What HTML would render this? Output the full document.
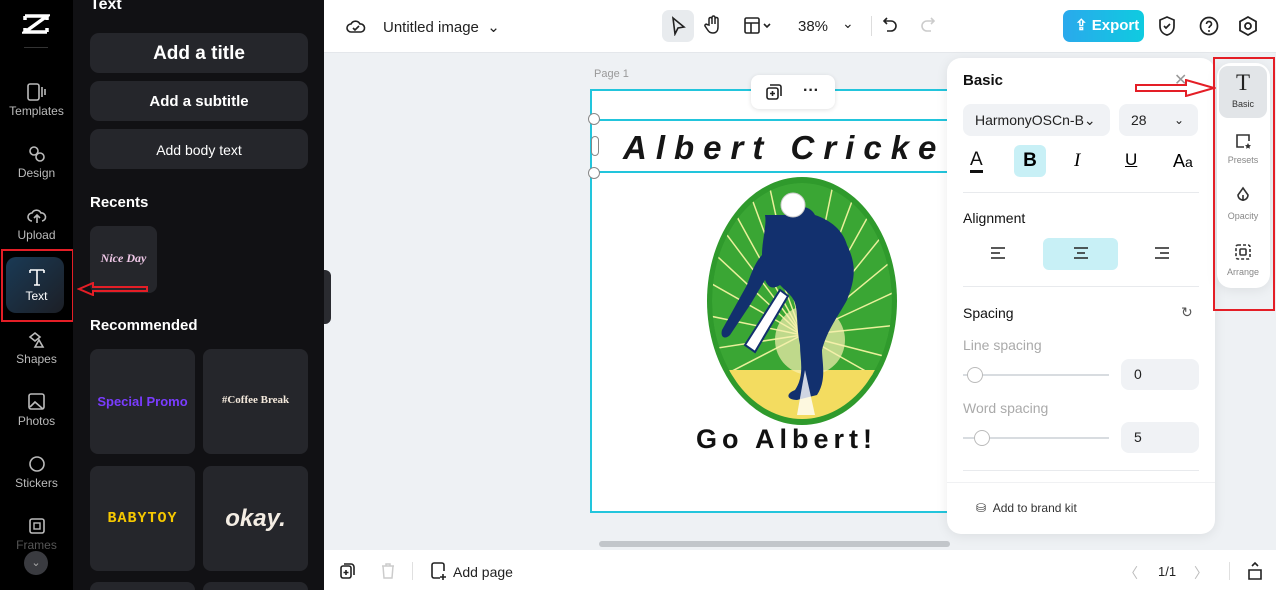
<!DOCTYPE html>
<html style="width:1276px;height:590px;overflow:hidden"><head><meta charset="utf-8"><style>
*{box-sizing:border-box;margin:0;padding:0}
body{width:1276px;height:590px;overflow:hidden;font-family:"Liberation Sans",sans-serif;background:#eef1f4;position:relative}
.abs{position:absolute}
#nav{left:0;top:0;width:73px;height:590px;background:#000}
.ni{position:absolute;left:0;width:73px;text-align:center;color:#bbb;font-size:12px}
.ni svg{display:block;margin:0 auto 3px}
#panel{left:73px;top:0;width:251px;height:590px;background:#111114;overflow:hidden}
.btn{position:absolute;left:17px;width:218px;background:#25262b;border-radius:9px;color:#fff;text-align:center;font-weight:bold}
.h{position:absolute;left:17px;color:#fff;font-weight:bold;font-size:15px}
.card{position:absolute;width:105px;background:#25262b;border-radius:8px;text-align:center;font-weight:bold}
#top{left:324px;top:0;width:952px;height:53px;background:#fff;border-bottom:1px solid #e4e7eb}
#bot{left:324px;top:550px;width:952px;height:40px;background:#fff}
.rp{background:#fff;border-radius:14px;box-shadow:0 2px 12px rgba(0,0,0,.08)}
.lbl{color:#111;font-size:14px;font-weight:bold}
.sel{background:#f0f2f5;border-radius:8px}
</style></head><body>

<div id="nav" class="abs">
 <svg class="abs" style="left:22px;top:13px" width="28" height="22" viewBox="0 0 28 22"><path d="M3 3h22L3 19h22M3 3v4M25 19v-4M3 19v-4M25 3v4" stroke="#fff" stroke-width="3.5" fill="none"/></svg>
 <div class="abs" style="left:24px;top:47px;width:24px;height:1px;background:#333"></div>
 <div class="ni" style="top:83px"><svg width="20" height="18"><rect x="1" y="1" width="11" height="16" rx="2" stroke="#bbb" fill="none" stroke-width="1.6"/><path d="M15 4v10M18 6v6" stroke="#bbb" stroke-width="1.6"/></svg>Templates</div>
 <div class="ni" style="top:145px"><svg width="20" height="18"><circle cx="7" cy="6" r="4" stroke="#bbb" fill="none" stroke-width="1.6"/><circle cx="13" cy="12" r="4" stroke="#bbb" fill="none" stroke-width="1.6"/></svg>Design</div>
 <div class="ni" style="top:207px"><svg width="20" height="18"><path d="M5 14a4 4 0 010-8 5 5 0 019 0 4 4 0 011 8M10 16V8M7 11l3-3 3 3" stroke="#bbb" fill="none" stroke-width="1.6"/></svg>Upload</div>
 <div class="abs" style="left:1px;top:249px;width:73px;height:73px;border:2px solid #e41e26"></div>
 <div class="abs" style="left:6px;top:257px;width:58px;height:56px;border-radius:10px;background:linear-gradient(135deg,#1a3a55,#1c1f26)"></div>
 <div class="ni" style="top:268px;color:#fff"><svg width="20" height="18"><path d="M3 2h14M10 2v15M7 17h6M3 2v3M17 2v3" stroke="#fff" fill="none" stroke-width="1.6"/></svg>Text</div>
 <div class="ni" style="top:331px"><svg width="20" height="18"><path d="M3 6l5-4 5 4-5 4zM8 16l4-7 4 7z" stroke="#bbb" fill="none" stroke-width="1.6"/></svg>Shapes</div>
 <div class="ni" style="top:393px"><svg width="20" height="18"><rect x="2" y="1" width="15" height="15" rx="2" stroke="#bbb" fill="none" stroke-width="1.6"/><path d="M3 14l5-5 8 7" stroke="#bbb" fill="none" stroke-width="1.6"/></svg>Photos</div>
 <div class="ni" style="top:455px"><svg width="20" height="18"><circle cx="10" cy="9" r="7" stroke="#bbb" fill="none" stroke-width="1.6"/></svg>Stickers</div>
 <div class="ni" style="top:517px;color:#555"><svg width="20" height="18"><rect x="3" y="2" width="14" height="14" rx="2" stroke="#bbb" fill="none" stroke-width="1.6"/><rect x="7" y="6" width="6" height="6" stroke="#bbb" fill="none" stroke-width="1.4"/></svg>Frames</div>
 <div class="abs" style="left:24px;top:551px;width:24px;height:24px;border-radius:50%;background:#3a3b40;color:#aaa;font-size:11px;text-align:center;line-height:24px">⌄</div>
</div>

<div id="panel" class="abs">
 <div class="h" style="top:-4px;font-size:16px">Text</div>
 <div class="btn" style="top:33px;height:40px;line-height:42px;font-size:19px">Add a title</div>
 <div class="btn" style="top:81px;height:40px;line-height:42px;font-size:15px">Add a subtitle</div>
 <div class="btn" style="top:129px;height:40px;line-height:42px;font-size:14px;font-weight:normal">Add body text</div>
 <div class="h" style="top:194px">Recents</div>
 <div class="card" style="left:17px;top:226px;width:67px;height:67px;line-height:64px;color:#f0c8e8;font-style:italic;font-size:12px;font-family:'Liberation Serif',serif">Nice Day</div>
 <div class="h" style="top:317px">Recommended</div>
 <div class="card" style="left:17px;top:349px;height:105px;line-height:105px;color:#7a3cff;font-size:13px">Special Promo</div>
 <div class="card" style="left:130px;top:349px;height:105px;line-height:103px;color:#f4e9dc;font-size:11px;font-family:'Liberation Serif',serif">#Coffee Break</div>
 <div class="card" style="left:17px;top:466px;height:105px;line-height:105px;color:#f6c800;font-size:15px;letter-spacing:1px;font-family:'Liberation Mono',monospace">BABYTOY</div>
 <div class="card" style="left:130px;top:466px;height:105px;line-height:105px;color:#f4ede4;font-size:24px;font-style:italic">okay.</div>
 <div class="card" style="left:17px;top:582px;height:20px"></div>
 <div class="card" style="left:130px;top:582px;height:20px"></div>
 <svg class="abs" style="left:4px;top:282px" width="72" height="14"><path d="M2 7l14-6v4h54v4H16v4z" fill="none" stroke="#e41e26" stroke-width="2"/></svg>
</div>
<div class="abs" style="left:324px;top:270px;width:7px;height:54px;background:#2a2b30;border-radius:0 6px 6px 0"></div>

<div id="top" class="abs">
 <svg class="abs" style="left:22px;top:17px" width="20" height="18"><path d="M5 15a4 4 0 010-8 5 5 0 019 0 4 4 0 011 8z M7 11l2 2 4-4" stroke="#222" fill="none" stroke-width="1.6"/></svg>
 <div class="abs" style="left:59px;top:18px;font-size:15px;color:#222">Untitled image &nbsp;⌄</div>
 <div class="abs" style="left:338px;top:10px;width:32px;height:32px;background:#e8ebee;border-radius:7px"></div>
 <svg class="abs" style="left:346px;top:16px" width="16" height="20"><path d="M3 2l11 9-6 1-3 6z" stroke="#222" fill="none" stroke-width="1.6"/></svg>
 <svg class="abs" style="left:380px;top:15px" width="18" height="20"><path d="M5 10V4a1.5 1.5 0 013 0v5V2.5a1.5 1.5 0 013 0V9V4a1.5 1.5 0 013 0v8c0 4-2 6-5 6s-4-1-6-4l-2-3a1.3 1.3 0 012-1.5z" stroke="#222" fill="none" stroke-width="1.5"/></svg>
 <svg class="abs" style="left:420px;top:16px" width="30" height="20"><rect x="1" y="2" width="14" height="15" rx="1.5" stroke="#222" fill="none" stroke-width="1.6"/><path d="M1 7h14M7 7v10M20 8l3 3 3-3" stroke="#222" fill="none" stroke-width="1.6"/></svg>
 <div class="abs" style="left:474px;top:18px;font-size:15px;color:#222">38%</div>
 <div class="abs" style="left:518px;top:15px;font-size:14px;color:#222">⌄</div>
 <div class="abs" style="left:547px;top:16px;width:1px;height:20px;background:#ddd"></div>
 <svg class="abs" style="left:558px;top:16px" width="18" height="20"><path d="M5 2L2 5l3 3M2 5h7a5 5 0 010 10H5" stroke="#222" fill="none" stroke-width="1.6"/></svg>
 <svg class="abs" style="left:594px;top:16px" width="18" height="20"><path d="M13 2l3 3-3 3M16 5H9a5 5 0 000 10h4" stroke="#ccc" fill="none" stroke-width="1.6"/></svg>
 <div class="abs" style="left:739px;top:10px;width:81px;height:32px;border-radius:7px;background:linear-gradient(90deg,#2aa9ec,#0fcbe0);color:#fff;font-weight:bold;font-size:15px;line-height:32px;padding-left:12px">⇪ Export</div>
 <svg class="abs" style="left:833px;top:15px" width="20" height="22"><path d="M10 2l7 3v6c0 5-3 8-7 9-4-1-7-4-7-9V5z M7 11l2 2 4-4" stroke="#222" fill="none" stroke-width="1.7"/></svg>
 <svg class="abs" style="left:874px;top:15px" width="22" height="22"><circle cx="11" cy="11" r="8.5" stroke="#222" fill="none" stroke-width="1.7"/><path d="M8.5 9a2.5 2.5 0 115 0c0 2-2.5 2-2.5 4" stroke="#222" fill="none" stroke-width="1.7"/><circle cx="11" cy="16" r="1" fill="#222"/></svg>
 <svg class="abs" style="left:913px;top:15px" width="22" height="22"><path d="M11 2l8 4.5v9L11 20l-8-4.5v-9z" stroke="#222" fill="none" stroke-width="1.8"/><circle cx="11" cy="11" r="3" stroke="#222" fill="none" stroke-width="1.8"/></svg>
</div>

<!-- canvas -->
<div class="abs" style="left:594px;top:68px;font-size:11px;color:#999">Page 1</div>
<div class="abs" style="left:590px;top:89px;width:380px;height:424px;background:#fff;border:2px solid #22c5dc"></div>
<div class="abs" style="left:592px;top:119px;width:370px;height:54px;border-top:2px solid #22c5dc;border-bottom:2px solid #22c5dc"></div>
<div class="abs" style="left:623px;top:129px;font-size:33px;font-weight:bold;font-style:italic;letter-spacing:9px;color:#151515;white-space:nowrap">Albert Cricke</div>
<div class="abs" style="left:588px;top:113px;width:12px;height:12px;border-radius:50%;background:#fff;border:1px solid #888"></div>
<div class="abs" style="left:588px;top:167px;width:12px;height:12px;border-radius:50%;background:#fff;border:1px solid #888"></div>
<div class="abs" style="left:591px;top:136px;width:8px;height:20px;border-radius:4px;background:#fff;border:1px solid #888"></div>
<div class="abs" style="left:751px;top:75px;width:84px;height:34px;background:#fff;border-radius:8px;box-shadow:0 1px 5px rgba(0,0,0,.12)"></div>
<svg class="abs" style="left:765px;top:83px" width="18" height="18"><rect x="2" y="5" width="11" height="11" rx="2" stroke="#222" fill="none" stroke-width="1.6"/><path d="M5 2h9a2 2 0 012 2v9M7.5 8v5M5 10.5h5" stroke="#222" fill="none" stroke-width="1.6"/></svg>
<div class="abs" style="left:803px;top:82px;font-size:16px;font-weight:bold;color:#222">···</div>
<svg class="abs" style="left:705px;top:175px" width="194" height="252" viewBox="0 0 194 252">
 <defs><clipPath id="c"><ellipse cx="97" cy="126" rx="90" ry="118"/></clipPath></defs>
 <ellipse cx="97" cy="126" rx="95" ry="124" fill="#2f9a2c"/>
 <g clip-path="url(#c)">
  <ellipse cx="97" cy="126" rx="90" ry="118" fill="#3aa634"/>
  <g stroke="#e9f09a" stroke-width="1.5">
   <path d="M97 160L7 40M97 160L20 20M97 160L40 5M97 160L62 0M97 160L130 0M97 160L155 5M97 160L175 20M97 160L190 45M97 160L194 80M97 160L194 115M97 160L194 150M97 160L194 185M97 160L0 70M97 160L0 105M97 160L0 140M97 160L0 175M97 160L0 210M97 160L194 215"/>
  </g>
  <path d="M0 195h194v60H0z" fill="#f3dc60"/>
  <circle cx="105" cy="165" r="35" fill="#f8f0b0" opacity=".7"/>
 </g>
 <path d="M80 40c10-12 25-10 30 0 15 5 28 15 32 30 10 20 8 35 0 55-8 15-20 30-25 50 0 12 5 30-5 45l-20 5c-10 0-12-6-2-10 10-15 5-30 5-45-5-25 0-40-10-50l-10-10c-8 5-12 2-15-5l-15 25-20 30c-5 5-10 2-8-5l25-45c5-15 10-25 15-30 0-15 5-30 3-40z" fill="#12306e"/>
 <path d="M40 170l35-55 8 6-33 56z" fill="#fff" stroke="#12306e" stroke-width="2"/>
 <path d="M100 195l10 45h-18z" fill="#fff" opacity=".8"/>
 <circle cx="88" cy="30" r="12" fill="#fff" stroke="#ccc"/>
</svg>
<div class="abs" style="left:696px;top:424px;font-size:27px;font-weight:bold;letter-spacing:5px;color:#111">Go Albert!</div>
<div class="abs" style="left:599px;top:541px;width:351px;height:6px;border-radius:3px;background:#c2c6ca"></div>

<!-- right panel -->
<div class="abs rp" style="left:947px;top:58px;width:268px;height:476px"></div>
<div class="abs lbl" style="left:963px;top:72px;font-size:15px">Basic</div>
<div class="abs" style="left:1174px;top:70px;font-size:16px;color:#999">✕</div>
<svg class="abs" style="left:1134px;top:79px" width="82" height="18"><path d="M2 6h50V1l28 8-28 8v-5H2z" fill="none" stroke="#e41e26" stroke-width="2"/></svg>
<div class="abs sel" style="left:963px;top:104px;width:147px;height:32px;font-size:14px;line-height:32px;padding-left:12px;color:#222">HarmonyOSCn-B⌄</div>
<div class="abs sel" style="left:1119px;top:104px;width:79px;height:32px;font-size:14px;line-height:32px;padding-left:12px;color:#222">28 <span style="position:absolute;right:14px;font-size:12px">⌄</span></div>
<div class="abs" style="left:970px;top:150px;font-size:19px;color:#111;border-bottom:3px solid #111;line-height:20px">A</div>
<div class="abs" style="left:1014px;top:145px;width:32px;height:32px;border-radius:6px;background:#c8f0f6;text-align:center;line-height:32px;font-size:19px;font-weight:bold">B</div>
<div class="abs" style="left:1074px;top:150px;font-size:19px;font-style:italic;font-family:'Liberation Serif',serif">I</div>
<div class="abs" style="left:1125px;top:150px;font-size:17px;text-decoration:underline">U</div>
<div class="abs" style="left:1173px;top:151px;font-size:18px">A<span style="font-size:14px">a</span></div>
<div class="abs" style="left:963px;top:192px;width:236px;height:1px;background:#e8eaed"></div>
<div class="abs lbl" style="left:963px;top:210px;font-weight:normal;color:#111">Alignment</div>
<div class="abs" style="left:1043px;top:238px;width:75px;height:32px;border-radius:6px;background:#c8f0f6"></div>
<svg class="abs" style="left:991px;top:246px" width="200" height="16"><path d="M0 2h14M0 7h9M0 12h14M83 2h14M86 7h8M83 12h14M164 2h14M169 7h9M164 12h14" stroke="#222" stroke-width="1.6"/></svg>
<div class="abs" style="left:963px;top:286px;width:236px;height:1px;background:#e8eaed"></div>
<div class="abs lbl" style="left:963px;top:305px;font-weight:normal;color:#111">Spacing</div>
<div class="abs" style="left:1181px;top:304px;font-size:14px;color:#555">↻</div>
<div class="abs" style="left:963px;top:337px;font-size:14px;color:#aaa">Line spacing</div>
<div class="abs" style="left:963px;top:374px;width:146px;height:2px;background:#d8dce0"></div>
<div class="abs" style="left:967px;top:367px;width:16px;height:16px;border-radius:50%;background:#fff;border:1px solid #bbb"></div>
<div class="abs sel" style="left:1121px;top:359px;width:78px;height:31px;font-size:14px;line-height:31px;padding-left:13px;color:#222">0</div>
<div class="abs" style="left:963px;top:400px;font-size:14px;color:#aaa">Word spacing</div>
<div class="abs" style="left:963px;top:437px;width:146px;height:2px;background:#d8dce0"></div>
<div class="abs" style="left:974px;top:430px;width:16px;height:16px;border-radius:50%;background:#fff;border:1px solid #bbb"></div>
<div class="abs sel" style="left:1121px;top:422px;width:78px;height:31px;font-size:14px;line-height:31px;padding-left:13px;color:#222">5</div>
<div class="abs" style="left:963px;top:470px;width:236px;height:1px;background:#e8eaed"></div>
<div class="abs" style="left:947px;top:482px;width:268px;height:1px;background:#f0f1f3"></div>
<div class="abs" style="left:976px;top:501px;font-size:12px;color:#333">⛁ &nbsp;Add to brand kit</div>

<!-- side tabs -->
<div class="abs rp" style="left:1217px;top:63px;width:53px;height:225px"></div>
<div class="abs" style="left:1219px;top:66px;width:48px;height:52px;border-radius:9px;background:#e2e5e8"></div>
<div class="abs" style="left:1213px;top:57px;width:62px;height:254px;border:2px solid #e41e26"></div>
<div class="abs" style="left:1218px;top:70px;width:50px;text-align:center;font-size:23px;font-family:'Liberation Serif',serif;color:#222">T</div>
<div class="abs" style="left:1218px;top:99px;width:50px;text-align:center;font-size:9px;color:#333">Basic</div>
<svg class="abs" style="left:1234px;top:132px" width="18" height="18"><path d="M10 15H3V3h12v6" stroke="#333" fill="none" stroke-width="1.6"/><path d="M14 11l1 2 2 .3-1.5 1.4.4 2-1.9-1-1.9 1 .4-2L11 13.3l2-.3z" fill="#333"/></svg>
<div class="abs" style="left:1218px;top:155px;width:50px;text-align:center;font-size:9px;color:#888">Presets</div>
<svg class="abs" style="left:1235px;top:186px" width="16" height="18"><path d="M8 2l5 7a5 5 0 11-10 0z M8 9v6" stroke="#333" fill="none" stroke-width="1.6"/></svg>
<div class="abs" style="left:1218px;top:211px;width:50px;text-align:center;font-size:9px;color:#888">Opacity</div>
<svg class="abs" style="left:1234px;top:243px" width="18" height="18"><rect x="2" y="2" width="14" height="14" rx="2" stroke="#333" fill="none" stroke-width="1.6" stroke-dasharray="3 2"/><rect x="6" y="6" width="6" height="6" rx="1" stroke="#333" fill="none" stroke-width="1.6"/></svg>
<div class="abs" style="left:1218px;top:267px;width:50px;text-align:center;font-size:9px;color:#888">Arrange</div>

<div id="bot" class="abs">
 <svg class="abs" style="left:15px;top:12px" width="18" height="18"><rect x="2" y="4" width="10" height="12" rx="2" stroke="#222" fill="none" stroke-width="1.6"/><path d="M5 2h7a3 3 0 013 3v8M7 8v5M4.5 10.5h5" stroke="#222" fill="none" stroke-width="1.6"/></svg>
 <svg class="abs" style="left:56px;top:12px" width="16" height="18"><path d="M2 4h12M6 4V2h4v2M3 4l1 12h8l1-12" stroke="#ccc" fill="none" stroke-width="1.5"/></svg>
 <div class="abs" style="left:88px;top:12px;width:1px;height:18px;background:#e0e0e0"></div>
 <svg class="abs" style="left:106px;top:12px" width="18" height="18"><path d="M10 16H4a2 2 0 01-2-2V3a2 2 0 012-2h8a2 2 0 012 2v6M13 12v6M10 15h6" stroke="#222" fill="none" stroke-width="1.6"/></svg>
 <div class="abs" style="left:129px;top:14px;font-size:14px;color:#222">Add page</div>
 <div class="abs" style="left:800px;top:13px;font-size:14px;color:#bbb">〈</div>
 <div class="abs" style="left:834px;top:14px;font-size:13px;color:#222">1/1</div>
 <div class="abs" style="left:870px;top:13px;font-size:14px;color:#bbb">〉</div>
 <div class="abs" style="left:905px;top:12px;width:1px;height:18px;background:#e0e0e0"></div>
 <svg class="abs" style="left:922px;top:11px" width="18" height="20"><path d="M6 5l3-3 3 3M3 9h12v9H3z" stroke="#222" fill="none" stroke-width="1.6"/></svg>
</div>
</body></html>
